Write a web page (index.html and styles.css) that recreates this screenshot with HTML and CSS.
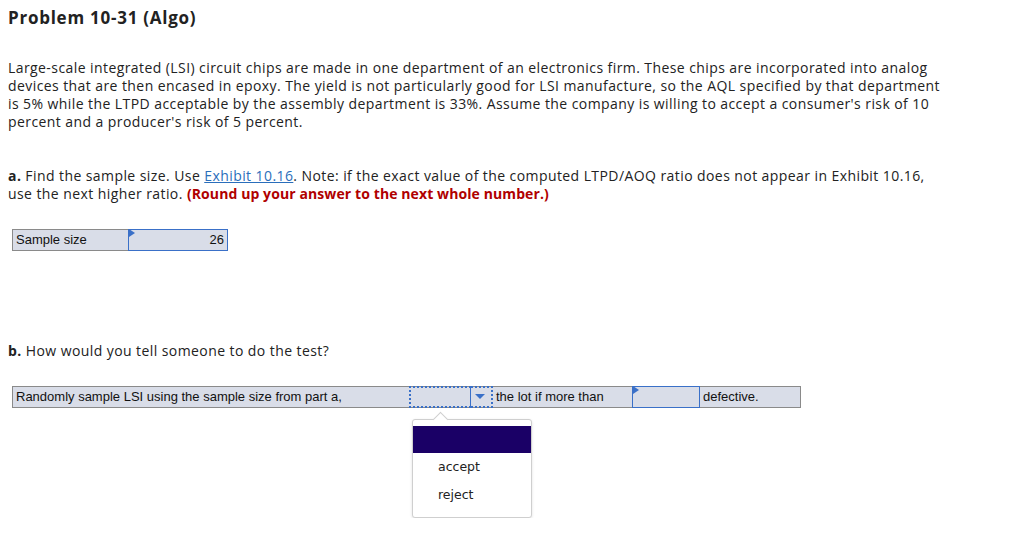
FILE: index.html
```html
<!DOCTYPE html>
<html>
<head>
<meta charset="utf-8">
<link rel="stylesheet" href="styles.css">
</head>
<body>
<div class="page">
  <h1 class="title">Problem 10-31 (Algo)</h1>
  <p class="intro">Large-scale integrated (LSI) circuit chips are made in one department of an electronics firm. These chips are incorporated into analog devices that are then encased in epoxy. The yield is not particularly good for LSI manufacture, so the AQL specified by that department is 5% while the LTPD acceptable by the assembly department is 33%. Assume the company is willing to accept a consumer's risk of 10 percent and a producer's risk of 5 percent.</p>
  <p class="part-a"><b>a.</b> Find the sample size. Use <a class="link" href="#">Exhibit 10.16</a>. Note: if the exact value of the computed LTPD/AOQ ratio does not appear in Exhibit 10.16, use the next higher ratio. <span class="hint">(Round up your answer to the next whole number.)</span></p>
  <div class="grid-a">
    <div class="cell label-cell">Sample size</div>
    <div class="cell input-cell num"><span class="flag"></span>26</div>
  </div>
  <p class="part-b"><b>b.</b> How would you tell someone to do the test?</p>
  <div class="grid-b">
    <div class="cell text1">Randomly sample LSI using the sample size from part a,</div>
    <div class="cell select-cell">
      <span class="sel-box"></span>
      <span class="sel-arrow"></span>
    </div>
    <div class="cell text2">the lot if more than</div>
    <div class="cell input-cell blank"><span class="flag"></span></div>
    <div class="cell text3">defective.</div>
  </div>
  <div class="choices">
    <span class="caret"></span>
    <div class="opt hl"></div>
    <div class="opt">accept</div>
    <div class="opt">reject</div>
  </div>
</div>
</body>
</html>
```
FILE: styles.css
```css
html, body { margin: 0; padding: 0; background: #fff; }
.page {
  padding: 0 8px;
  font-family: "Open Sans", sans-serif;
  color: #222;
  font-size: 14px;
  letter-spacing: 0.42px;
}
.title {
  margin: 0;
  padding-top: 8px;
  font-size: 17px;
  line-height: 20px;
  font-weight: 700;
  letter-spacing: 0.75px;
}
.intro, .part-a, .part-b {
  max-width: 942px;
  line-height: 18px;
}
.intro { margin: 31px 0 0; }
.part-a { margin: 36px 0 0; }
.link { color: #2a6ebb; text-decoration: underline; }
.hint { color: #b00000; font-weight: 700; letter-spacing: 0.1px; }
.cell {
  font-family: "Liberation Sans", Arial, sans-serif;
  font-size: 13px;
  letter-spacing: 0;
  color: #111;
  background: #d9dde8;
  box-sizing: border-box;
  height: 22px;
  line-height: 20px;
  padding: 0 3px;
  border: 1px solid #8a8a8a;
}
.grid-a {
  display: flex;
  margin: 26px 0 0 4px;
}
.label-cell { width: 116px; border-right: none; }
.input-cell {
  position: relative;
  border: 1px solid #3a70c8;
  background: #d9dde8;
}
.grid-a .input-cell { width: 100px; }
.num { text-align: right; }
.flag {
  position: absolute;
  left: 0;
  top: -1px;
  width: 0; height: 0;
  border-top: 4px solid transparent;
  border-bottom: 4px solid transparent;
  border-left: 6px solid #3a70c8;
}
.part-b { margin: 91px 0 0; }
.grid-b {
  display: flex;
  margin: 26px 0 0 4px;
}
.text1 { width: 397px; border-right: none; }
.select-cell {
  width: 84px;
  padding: 0;
  border-left: none;
  border-right: none;
  display: flex;
  align-items: stretch;
}
.sel-box {
  flex: 1;
  border: 2px dotted #3a70c8;
  border-right: 1px solid #3a70c8;
  margin: -1px 0;
}
.sel-arrow {
  width: 20px;
  border: 2px dotted #3a70c8;
  border-left: none;
  margin: -1px 0;
  position: relative;
}
.sel-arrow::after {
  content: "";
  position: absolute;
  left: 4px; top: 6px;
  border-left: 5px solid transparent;
  border-right: 5px solid transparent;
  border-top: 5px solid #3a70c8;
}
.text2 { width: 139px; border-left: none; border-right: none; }
.grid-b .input-cell { width: 68px; }
.text3 { width: 101px; border-left: none; }
.choices {
  position: relative;
  margin: 11px 0 0 404px;
  width: 120px;
  box-sizing: border-box;
  background: #fff;
  border: 1px solid #cfcfcf;
  border-radius: 3px;
  box-shadow: 0 1px 3px rgba(0,0,0,0.12);
  padding: 6px 0 8px;
  font-family: "DejaVu Sans", Verdana, sans-serif;
  font-size: 12.5px;
  letter-spacing: 0;
  color: #222;
}
.caret {
  position: absolute;
  left: 22px; top: -6px;
  width: 10px; height: 10px;
  background: #fff;
  border-left: 1px solid #cfcfcf;
  border-top: 1px solid #cfcfcf;
  transform: rotate(45deg);
}
.opt {
  height: 28px;
  line-height: 28px;
  padding-left: 25px;
  position: relative;
}
.opt.hl { background: #1a0066; height: 27px; }
```
